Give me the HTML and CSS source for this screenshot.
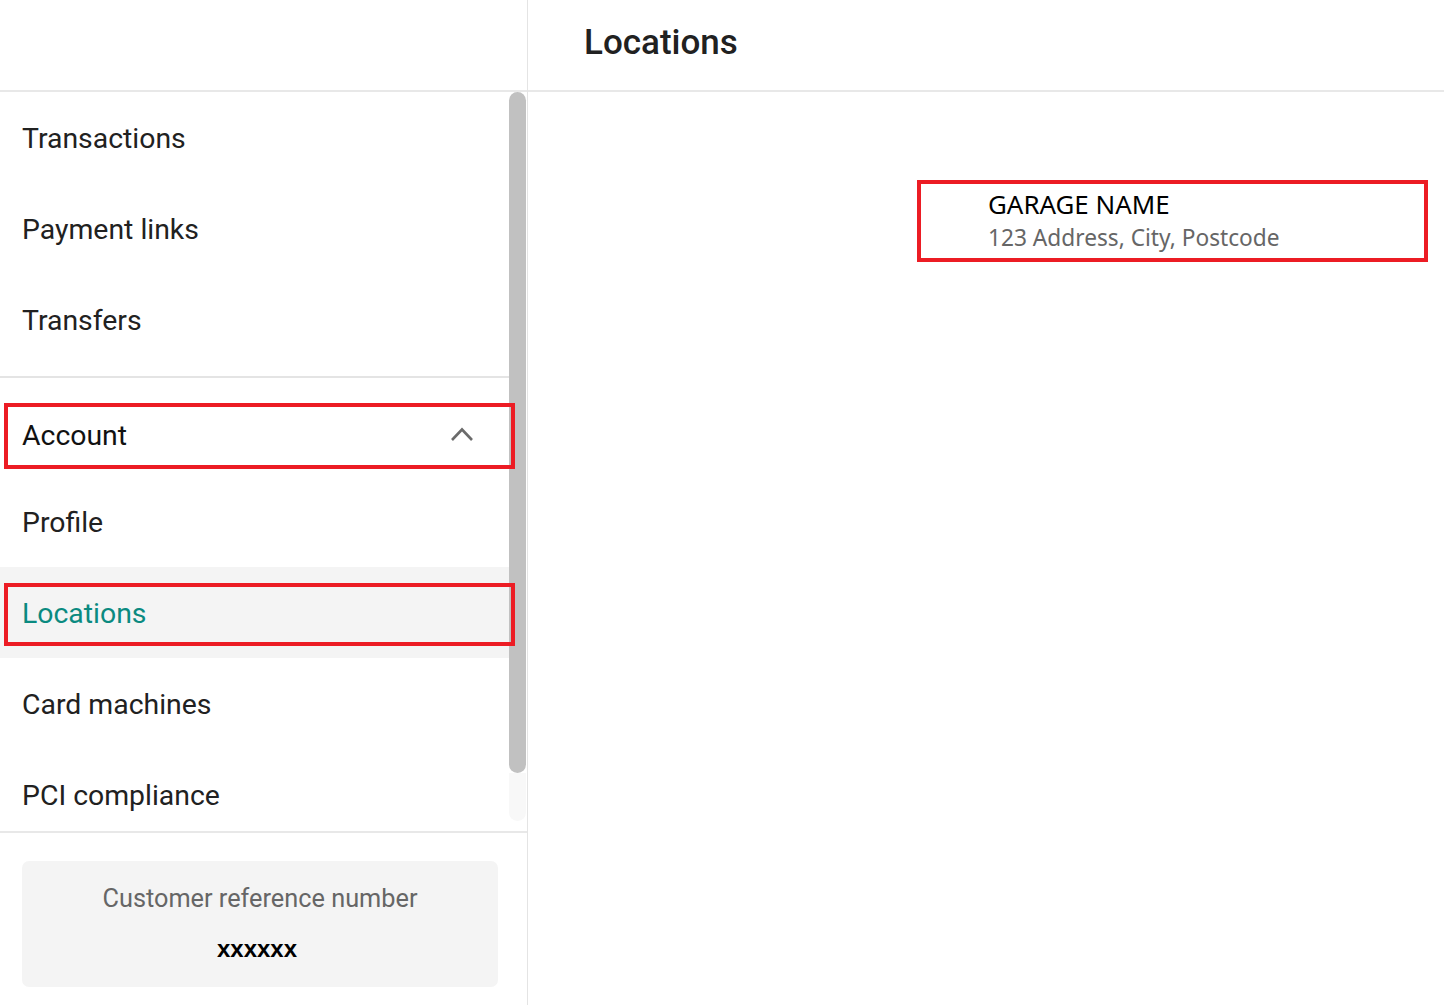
FILE: index.html
```html
<!DOCTYPE html>
<html>
<head>
<meta charset="utf-8">
<link rel="stylesheet" href="styles.css">
</head>
<body>
<div class="app">
  <aside class="sidebar">
    <div class="side-top"></div>
    <div class="scroll">
      <div class="nav-list">
        <div class="nav-item">Transactions</div>
        <div class="nav-item">Payment links</div>
        <div class="nav-item">Transfers</div>
        <div class="divider"></div>
        <div class="nav-group">
          <span>Account</span>
          <svg class="chev" width="24" height="16" viewBox="0 0 24 16"><path d="M2 14 L12 3.5 L22 14" fill="none" stroke="#6b6b6b" stroke-width="2.6"/></svg>
        </div>
        <div class="nav-item">Profile</div>
        <div class="nav-item active">Locations</div>
        <div class="nav-item">Card machines</div>
        <div class="nav-item">PCI compliance</div>
      </div>
      <div class="scrollbar"><div class="thumb"></div><div class="track"></div></div>
    </div>
    <div class="side-bottom">
      <div class="ref-card">
        <div class="ref-label">Customer reference number</div>
        <div class="ref-value">xxxxxx</div>
      </div>
    </div>
  </aside>
  <main class="main">
    <header class="header"><h1>Locations</h1></header>
    <div class="content">
      <div class="location">
        <div class="loc-name">GARAGE NAME</div>
        <div class="loc-addr">123 Address, City, Postcode</div>
      </div>
    </div>
  </main>
  <div class="mark mark-account"></div>
  <div class="mark mark-locations"></div>
  <div class="mark mark-garage"></div>
</div>
</body>
</html>
```
FILE: styles.css
```css
html, body { margin: 0; padding: 0; background: #fff; }
body { font-family: Roboto, "Liberation Sans", sans-serif; color: #212121; }
.app { position: relative; display: flex; width: 1444px; height: 1005px; overflow: hidden; }
.sidebar { width: 527px; border-right: 1px solid #e4e4e4; display: flex; flex-direction: column; flex-shrink: 0; }
.side-top { height: 90px; border-bottom: 2px solid #e8e8e8; flex-shrink: 0; }
.scroll { height: 739px; display: flex; overflow: hidden; border-bottom: 2px solid #e8e8e8; flex-shrink: 0; }
.nav-list { flex: 1; }
.nav-item { height: 91px; display: flex; align-items: center; padding-left: 22px; font-size: 28.4px; color: #212121; padding-top: 1px; box-sizing: border-box; }
.nav-item.active { background: #f4f4f4; color: #0a8a80; }
.divider { margin-top: 11px; border-top: 2px solid #e4e4e4; }
.nav-group { margin-top: 16px; height: 82px; display: flex; align-items: center; justify-content: space-between; padding-left: 22px; padding-right: 35px; font-size: 28.4px; color: #111; }
.chev { display: block; margin-top: -2px; }
.scrollbar { width: 17px; margin-right: 1px; display: flex; flex-direction: column; }
.thumb { height: 681px; background: #c1c1c1; border-radius: 9px; }
.track { height: 48px; background: #f8f8f8; border-radius: 0 0 9px 9px; }
.side-bottom { flex: 1; padding: 28px 29px 0 22px; }
.ref-card { background: #f4f4f4; border-radius: 7px; height: 126px; display: flex; flex-direction: column; align-items: center; }
.ref-label { margin-top: 23px; font-size: 25.3px; color: #666; }
.ref-value { margin-top: 22px; padding-right: 6px; font-family: "Liberation Sans", Arial, sans-serif; font-weight: bold; font-size: 24px; color: #000; }
.main { flex: 1; display: flex; flex-direction: column; }
.header { border-bottom: 2px solid #e8e8e8; display: flex; align-items: center; padding-left: 56px; padding-bottom: 6px; box-sizing: border-box; height: 92px; }
.header h1 { margin: 0; font-size: 35px; font-weight: 500; color: #212121; }
.content { padding: 96px 0 0 460px; }
.location { display: flex; flex-direction: column; }
.loc-name { font-family: "Noto Sans", "Open Sans", sans-serif; font-size: 25.9px; color: #000; line-height: 32px; }
.loc-addr { font-family: "Noto Sans", "Open Sans", sans-serif; font-size: 22.7px; color: #666; line-height: 35px; }
.mark { position: absolute; border: 4px solid #ec1c24; box-sizing: border-box; pointer-events: none; }
.mark-account { left: 4px; top: 403px; width: 511px; height: 66px; }
.mark-locations { left: 4px; top: 583px; width: 511px; height: 63px; }
.mark-garage { left: 917px; top: 180px; width: 511px; height: 82px; }
```
